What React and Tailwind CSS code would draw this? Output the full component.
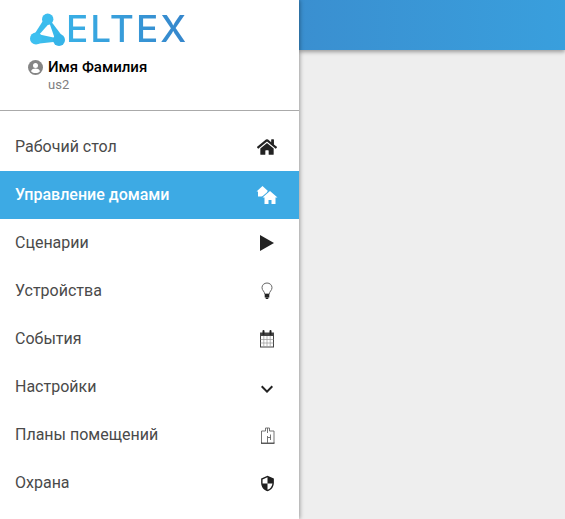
import React from "react";
import { FaHome } from "react-icons/fa";
import { MdExpandMore, MdSecurity } from "react-icons/md";

function Logo() {
  return (
    <svg width="40" height="36" viewBox="0 0 40 36" className="shrink-0">
      <path d="M15.500 9 L21.500 12 L10 25 L6.500 23 Z" fill="#3bbcec" />
      <path d="M19 5 L35 26 L28 31 Z" fill="#38b8ea" />
      <path d="M7 22.500 L30 27.500 L30 30.500 L7 33 Z" fill="#3bbcec" />
      <circle cx="19.700" cy="8.300" r="5.700" fill="#3cbdee" />
      <circle cx="8" cy="27.500" r="6" fill="#3dc0f0" />
      <circle cx="31" cy="29" r="6" fill="#36b4e8" />
    </svg>
  );
}

function TwoHomes() {
  return (
    <svg width="22" height="20" viewBox="0 0 22 20">
      <path d="M0.500 6.500 L6.500 1 L12.500 6.500 L11 6.500 L11 11.500 L2 11.500 L2 6.500 Z" fill="#fff" />
      <path d="M6.500 12.500 L14 6 L21.500 12.500 L19.500 12.500 L19.500 19 L15.500 19 L15.500 15 L12.500 15 L12.500 19 L8.500 19 L8.500 12.500 Z" fill="#fff" stroke="#3daae4" strokeWidth="2" paintOrder="stroke" />
    </svg>
  );
}

function PlayIcon() {
  return (
    <svg width="16" height="16" viewBox="0 0 16 16">
      <path d="M1 0 L15 8 L1 16 Z" fill="#222" />
    </svg>
  );
}

function BulbIcon() {
  return (
    <svg width="14" height="18" viewBox="0 0 14 18" fill="none">
      <path d="M4.700 12 C4.700 9.500 2 8.500 2 5.700 C2 3 4.200 1 7 1 C9.800 1 12 3 12 5.700 C12 8.500 9.300 9.500 9.300 12 Z" stroke="#666" strokeWidth="1" />
      <rect x="4.700" y="12" width="4.600" height="3.500" fill="#222" />
      <rect x="5.700" y="15.500" width="2.600" height="1.500" fill="#222" />
    </svg>
  );
}

function CalendarIcon() {
  return (
    <svg width="16" height="18" viewBox="0 0 16 18" fill="none">
      <rect x="1.500" y="3" width="13" height="14" stroke="#444" strokeWidth="1" />
      <rect x="1.500" y="3" width="13" height="3" fill="#444" />
      <path d="M4.800 6v10.500M8 6v10.500M11.200 6v10.500M1.500 9.500h13M1.500 13h13" stroke="#999" strokeWidth="0.700" />
      <path d="M4.500 1v3M11.500 1v3" stroke="#222" strokeWidth="2" strokeLinecap="round" />
    </svg>
  );
}

function PlanIcon() {
  return (
    <svg width="15" height="17" viewBox="0 0 15 17" fill="none" stroke="#666" strokeWidth="0.900">
      <path d="M1.500 16V4h4V1h4v3h4.500v12" />
      <path d="M1 16.200h13.500" stroke="#222" strokeWidth="1.100" />
      <path d="M7.500 1v5M7.500 9v7M7.500 10.500h3.500M10.500 7.500v5.500" />
    </svg>
  );
}

const items = [
  { label: "Рабочий стол", icon: <FaHome size={20} className="text-[#222]" /> },
  { label: "Управление домами", icon: <TwoHomes />, active: true },
  { label: "Сценарии", icon: <PlayIcon /> },
  { label: "Устройства", icon: <BulbIcon /> },
  { label: "События", icon: <CalendarIcon /> },
  { label: "Настройки", icon: <span className="mt-[3px] block"><MdExpandMore size={24} className="text-[#222]" /></span> },
  { label: "Планы помещений", icon: <PlanIcon /> },
  { label: "Охрана", icon: <MdSecurity size={17} className="text-[#1f1f1f]" /> },
];

export default function App() {
  return (
    <div className="flex h-[519px] w-[565px] overflow-hidden bg-[#eeeeee] font-['Roboto',sans-serif]">
      <aside className="relative z-10 w-[299px] shrink-0 bg-white shadow-[1px_0_4px_rgba(0,0,0,0.35)]">
        <div className="h-[111px] border-b border-[#aaaaaa] pt-[11px] pl-[28px]">
          <div className="flex h-[36px] items-center">
            <Logo />
            <span className="ml-[-2px] text-[37px] leading-[36px] font-medium tracking-[2px] font-['Inter',sans-serif] bg-gradient-to-r from-[#39b0e6] to-[#3585cb] bg-clip-text text-transparent">
              ELTEX
            </span>
          </div>
          <div className="mt-[11px] flex items-center gap-[5px]">
            <svg width="15" height="15" viewBox="0 0 15 15" className="shrink-0">
              <circle cx="7.500" cy="7.500" r="7.500" fill="#858585" />
              <circle cx="7.500" cy="5.600" r="2.500" fill="#fff" />
              <path d="M3 11.200c.6-1.900 2.600-2.600 4.500-2.600s3.900.7 4.500 2.600c-1 1.200-2.700 1.900-4.500 1.900S4 12.400 3 11.200z" fill="#fff" />
            </svg>
            <span className="text-[15px] leading-[18px] font-medium text-black">Имя Фамилия</span>
          </div>
          <div className="ml-[20px] mt-[1px] text-[13px] leading-[16px] text-[#808080]">us2</div>
        </div>
        <nav className="pt-[12px]">
          {items.map((it) => (
            <div
              key={it.label}
              className={
                it.active
                  ? "flex h-[48px] items-center justify-between bg-[#3daae4] pl-[15px] text-white font-medium"
                  : "flex h-[48px] items-center justify-between pl-[15px] text-[#4a4a4a]"
              }
            >
              <span className="text-[16px] leading-[20px]">{it.label}</span>
              <span className="flex w-[24px] mr-[20px] items-center justify-center">{it.icon}</span>
            </div>
          ))}
        </nav>
      </aside>
      <div className="flex-1">
        <header className="h-[50px] bg-gradient-to-r from-[#3a8fd0] to-[#399fdd] shadow-[0_2px_4px_rgba(0,0,0,0.35)]" />
      </div>
    </div>
  );
}
